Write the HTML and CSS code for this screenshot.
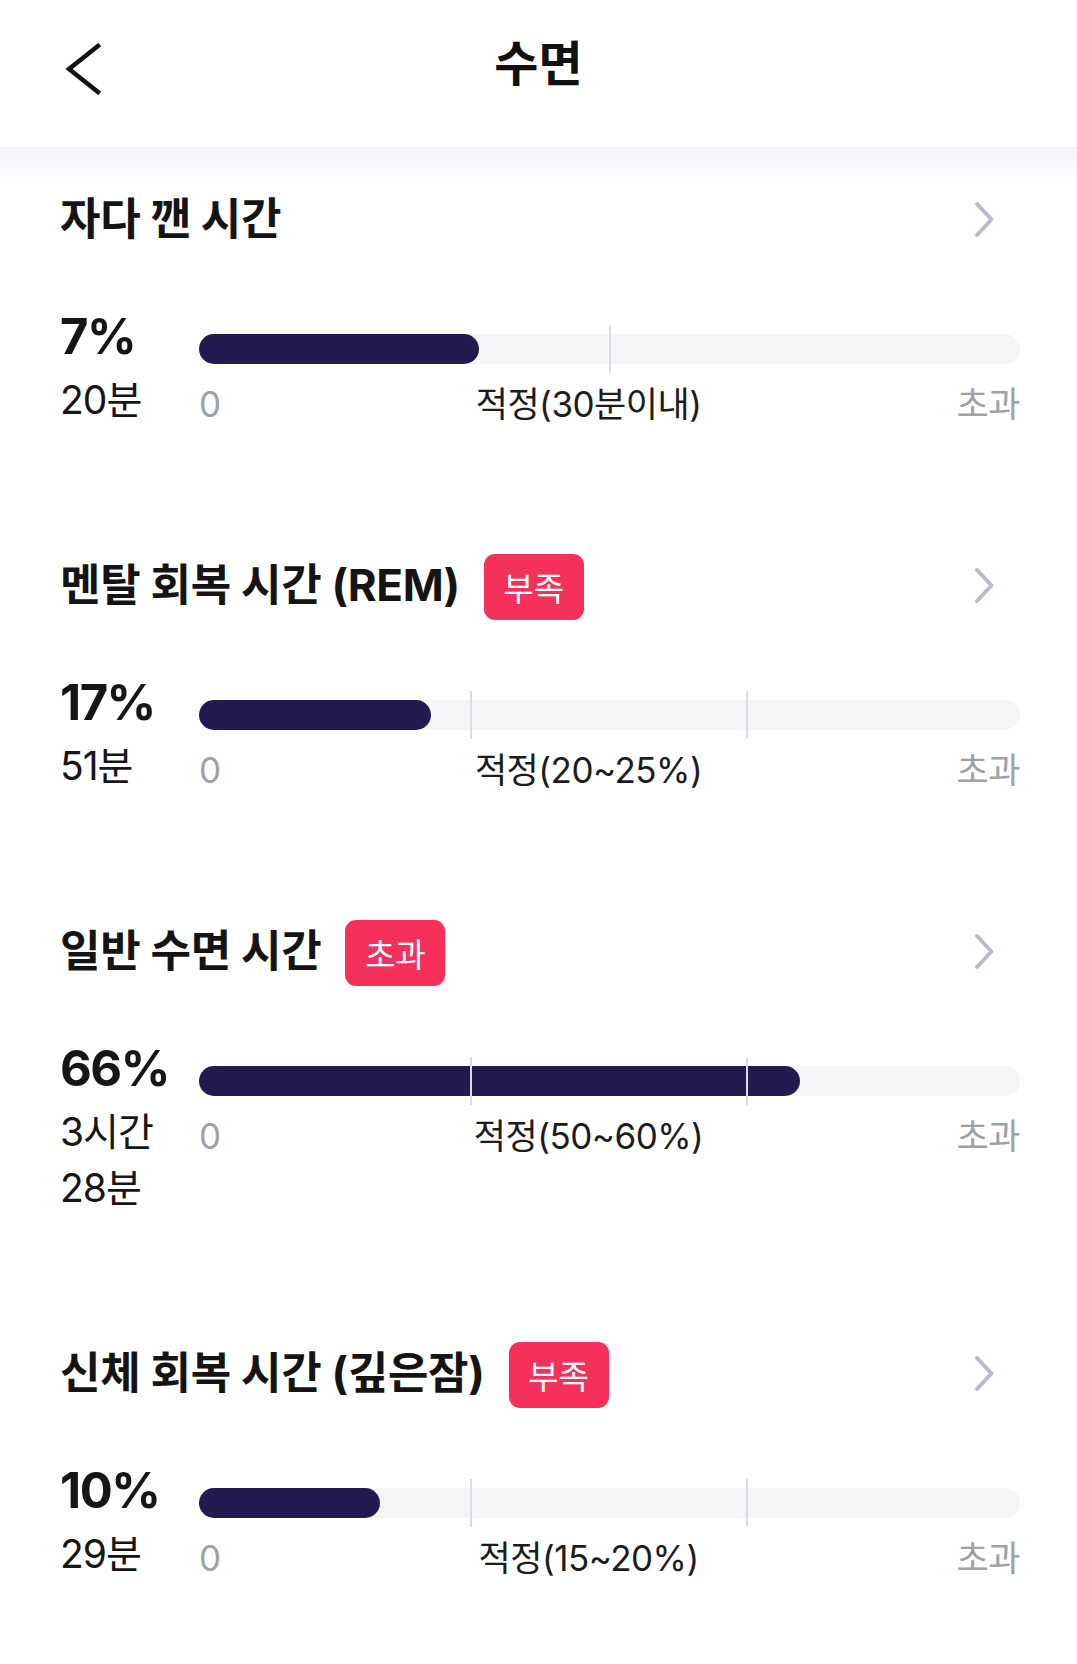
FILE: index.html
```html
<!DOCTYPE html>
<html lang="ko">
<head>
  <meta charset="UTF-8">
  <title>수면</title>
  <meta name="viewport" content="width=device-width, initial-scale=1.0">
  <link rel="stylesheet" href="styles.css">
</head>
<body>

  <header class="top-bar">
    <button class="back-btn" aria-label="뒤로">
      <svg width="36" height="52" viewBox="0 0 36 52"><path d="M33 3 L4 26 L33 49" fill="none" stroke="#111" stroke-width="4.5" stroke-linecap="square"/></svg>
    </button>
    <h1 class="page-title">수면</h1>
  </header>

  <main class="sleep-list">

    <section class="sleep-item">
      <div class="item-head">
        <h2 class="item-title">자다 깬 시간</h2>
        <svg class="more" width="24" height="37" viewBox="0 0 24 37"><path d="M5 3 L19.5 18.5 L5 34" fill="none" stroke="#b8bcca" stroke-width="4" stroke-linecap="round" stroke-linejoin="round"/></svg>
      </div>
      <div class="stat">
        <div class="pct">7%</div>
        <div class="bar">
          <div class="bar-fill" style="width: 34.1%"></div>
          <span class="mark" style="left: 50.1%"></span>
        </div>
        <div class="amount">20분</div>
        <div class="scale">
          <span class="muted">0</span>
          <span>적정(30분이내)</span>
          <span class="muted">초과</span>
        </div>
      </div>
    </section>

    <section class="sleep-item">
      <div class="item-head">
        <h2 class="item-title">멘탈 회복 시간 (REM)</h2>
        <span class="badge">부족</span>
        <svg class="more" width="24" height="37" viewBox="0 0 24 37"><path d="M5 3 L19.5 18.5 L5 34" fill="none" stroke="#b8bcca" stroke-width="4" stroke-linecap="round" stroke-linejoin="round"/></svg>
      </div>
      <div class="stat">
        <div class="pct">17%</div>
        <div class="bar">
          <div class="bar-fill" style="width: 28.3%"></div>
          <span class="mark" style="left: 33.1%"></span>
          <span class="mark" style="left: 66.7%"></span>
        </div>
        <div class="amount">51분</div>
        <div class="scale">
          <span class="muted">0</span>
          <span>적정(20~25%)</span>
          <span class="muted">초과</span>
        </div>
      </div>
    </section>

    <section class="sleep-item">
      <div class="item-head">
        <h2 class="item-title">일반 수면 시간</h2>
        <span class="badge">초과</span>
        <svg class="more" width="24" height="37" viewBox="0 0 24 37"><path d="M5 3 L19.5 18.5 L5 34" fill="none" stroke="#b8bcca" stroke-width="4" stroke-linecap="round" stroke-linejoin="round"/></svg>
      </div>
      <div class="stat">
        <div class="pct">66%</div>
        <div class="bar">
          <div class="bar-fill" style="width: 73.2%"></div>
          <span class="mark" style="left: 33.1%"></span>
          <span class="mark" style="left: 66.7%"></span>
        </div>
        <div class="amount">3시간 28분</div>
        <div class="scale">
          <span class="muted">0</span>
          <span>적정(50~60%)</span>
          <span class="muted">초과</span>
        </div>
      </div>
    </section>

    <section class="sleep-item">
      <div class="item-head">
        <h2 class="item-title">신체 회복 시간 (깊은잠)</h2>
        <span class="badge">부족</span>
        <svg class="more" width="24" height="37" viewBox="0 0 24 37"><path d="M5 3 L19.5 18.5 L5 34" fill="none" stroke="#b8bcca" stroke-width="4" stroke-linecap="round" stroke-linejoin="round"/></svg>
      </div>
      <div class="stat">
        <div class="pct">10%</div>
        <div class="bar">
          <div class="bar-fill" style="width: 22%"></div>
          <span class="mark" style="left: 33.1%"></span>
          <span class="mark" style="left: 66.7%"></span>
        </div>
        <div class="amount">29분</div>
        <div class="scale">
          <span class="muted">0</span>
          <span>적정(15~20%)</span>
          <span class="muted">초과</span>
        </div>
      </div>
    </section>

  </main>

</body>
</html>
```

FILE: styles.css
```css
body {
  margin: 0;
  font-family: "Inter", "Noto Sans CJK KR", sans-serif;
  background-color: #fff;
  color: #161616;
}

.top-bar {
  position: relative;
  height: 147px;
  display: flex;
  align-items: center;
  justify-content: center;
  background-color: #fff;
}

/* soft lavender fade under the bar */
.top-bar::after {
  content: "";
  position: absolute;
  left: 0;
  right: 0;
  top: 147px;
  height: 40px;
  background: linear-gradient(#f4f3fd, rgba(255, 255, 255, 0));
}

.back-btn {
  position: absolute;
  left: 65px;
  top: 43px;
  padding: 0;
  background: none;
  border: none;
  cursor: pointer;
}

.back-btn svg {
  display: block;
}

.page-title {
  margin: 0 0 28px 0;
  font-size: 48px;
  font-weight: 700;
  color: #111;
}

.sleep-list {
  padding: 41px 57px 20px 60px;
}

.sleep-item {
  margin-bottom: 126px;
}

.sleep-item:last-child {
  margin-bottom: 0;
}

.item-head {
  display: flex;
  align-items: center;
  height: 66px;
}

.item-title {
  margin: 0 0 10px 0;
  font-size: 44px;
  font-weight: 700;
  letter-spacing: -0.3px;
  color: #141414;
}

.badge {
  margin-left: 24px;
  width: 100px;
  height: 66px;
  display: flex;
  align-items: center;
  justify-content: center;
  box-sizing: border-box;
  border-radius: 11px;
  background-color: #f5305a;
  color: #fff;
  font-size: 33px;
}

.more {
  margin-left: auto;
  margin-right: 24px;
  margin-top: -4px;
}

.stat {
  display: grid;
  grid-template-columns: 139px 1fr;
  margin-top: 58px;
}

.pct {
  font-size: 49px;
  font-weight: 700;
  line-height: 50px;
  letter-spacing: -1.5px;
}

.bar {
  position: relative;
  height: 30px;
  margin-top: 22px;
  border-radius: 15px;
  background-color: #f5f5f7;
}

.bar-fill {
  height: 100%;
  border-radius: 15px;
  background-color: #231b50;
}

.mark {
  position: absolute;
  top: -9px;
  bottom: -9px;
  width: 2px;
  margin-left: -1px;
  background-color: #dcdce4;
}

.amount {
  margin-top: 8px;
  padding-right: 20px;
  font-size: 39px;
  line-height: 56px;
  letter-spacing: -1px;
}

.scale {
  display: flex;
  justify-content: space-between;
  align-self: start;
  margin-top: 22px;
  font-size: 35px;
  line-height: 36px;
  letter-spacing: -0.5px;
  color: #1c1c1c;
}

.scale .muted {
  color: #9ea1a9;
}
```
